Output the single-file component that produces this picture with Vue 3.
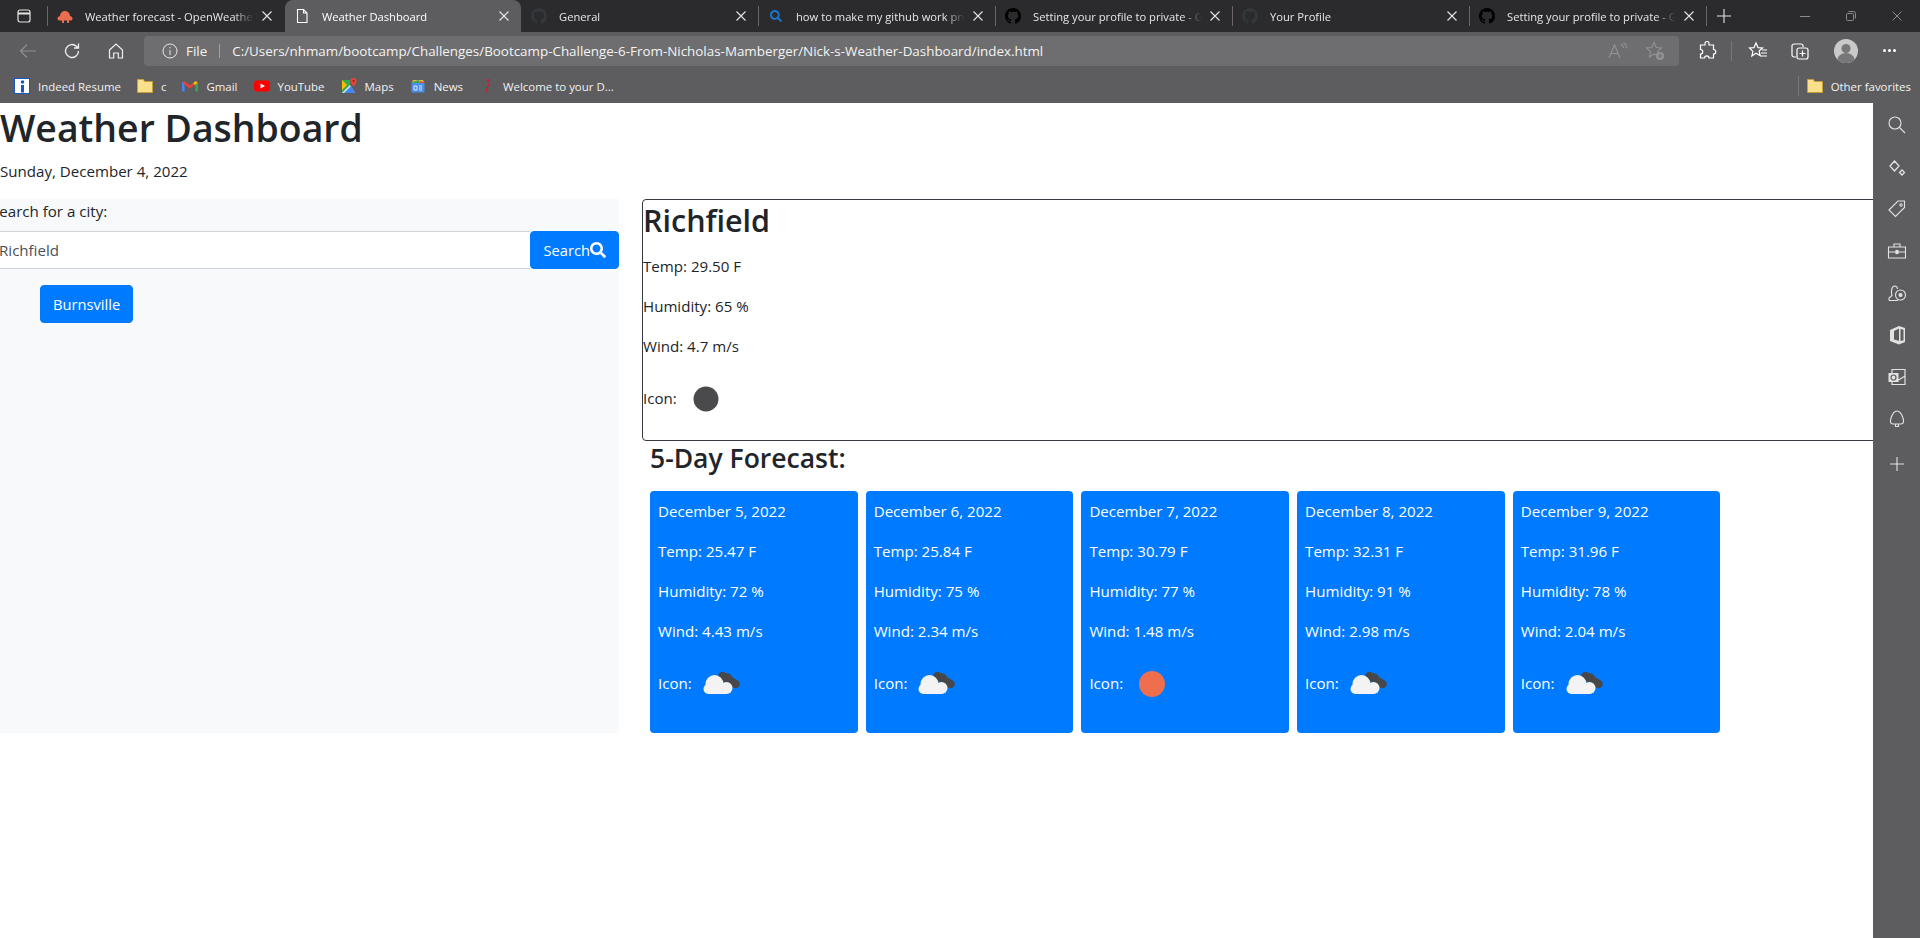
<script setup>
import { ref } from 'vue';

const githubPath = 'M8 0C3.58 0 0 3.58 0 8c0 3.54 2.29 6.53 5.47 7.59.4.07.55-.17.55-.38 0-.19-.01-.82-.01-1.49-2.01.37-2.53-.49-2.69-.94-.09-.23-.48-.94-.82-1.13-.28-.15-.68-.52-.01-.53.63-.01 1.08.58 1.23.82.72 1.21 1.87.87 2.33.66.07-.52.28-.87.51-1.07-1.78-.2-3.64-.89-3.64-3.95 0-.87.31-1.59.82-2.15-.08-.2-.36-1.02.08-2.12 0 0 .67-.21 2.2.82.64-.18 1.32-.27 2-.27.68 0 1.36.09 2 .27 1.53-1.04 2.2-.82 2.2-.82.44 1.1.16 1.92.08 2.12.51.56.82 1.27.82 2.15 0 3.07-1.87 3.75-3.65 3.95.29.25.54.73.54 1.48 0 1.07-.01 1.93-.01 2.2 0 .21.15.46.55.38A8.013 8.013 0 0016 8c0-4.42-3.58-8-8-8z';
const searchPath = 'M505 442.7L405.3 343c-4.5-4.5-10.6-7-17-7H372c27.6-35.3 44-79.7 44-128C416 93.1 322.9 0 208 0S0 93.1 0 208s93.1 208 208 208c48.3 0 92.7-16.4 128-44v16.3c0 6.4 2.5 12.5 7 17l99.7 99.7c9.4 9.4 24.6 9.4 33.9 0l28.3-28.3c9.4-9.4 9.4-24.6.1-34zM208 336c-70.7 0-128-57.2-128-128 0-70.7 57.2-128 128-128 70.7 0 128 57.2 128 128 0 70.7-57.2 128-128 128z';

const tabs = ref([
  { title: 'Weather forecast - OpenWeatherMap', icon: 'owm', sep: false },
  { title: 'Weather Dashboard', icon: 'page', active: true, sep: false },
  { title: 'General', icon: 'hub-dim', sep: true },
  { title: 'how to make my github work private', icon: 'bing', sep: true },
  { title: 'Setting your profile to private - GitHub', icon: 'hub', sep: true },
  { title: 'Your Profile', icon: 'hub-dim', sep: true },
  { title: 'Setting your profile to private - GitHub', icon: 'hub', sep: true }
]);

const bookmarks = ref([
  { label: 'Indeed Resume', icon: 'indeed' },
  { label: 'c', icon: 'folder' },
  { label: 'Gmail', icon: 'gmail' },
  { label: 'YouTube', icon: 'youtube' },
  { label: 'Maps', icon: 'maps' },
  { label: 'News', icon: 'news' },
  { label: 'Welcome to your D...', icon: 'red-i' }
]);

// Dagens vejr i hovedpanelet
const current = ref({ city: 'Richfield', temp: '29.50', humidity: 65, wind: '4.7' });

const forecast = ref([
  { date: 'December 5, 2022', temp: '25.47', humidity: 72, wind: '4.43', icon: 'cloud' },
  { date: 'December 6, 2022', temp: '25.84', humidity: 75, wind: '2.34', icon: 'cloud' },
  { date: 'December 7, 2022', temp: '30.79', humidity: 77, wind: '1.48', icon: 'sun' },
  { date: 'December 8, 2022', temp: '32.31', humidity: 91, wind: '2.98', icon: 'cloud' },
  { date: 'December 9, 2022', temp: '31.96', humidity: 78, wind: '2.04', icon: 'cloud' }
]);

const city = ref('Richfield');
const history = ref(['Burnsville']);
</script>

<template>
  <div class="shell">
    <!-- Browser tabs -->
    <div class="tabstrip">
      <div class="win-btn">
        <svg width="16" height="16" viewBox="0 0 16 16" fill="none" stroke="#e4e4e4" stroke-width="1.2">
          <rect x="2" y="2" width="12" height="12" rx="2" />
          <path d="M2 5.5h12" stroke-width="2" />
        </svg>
      </div>
      <span class="tab-sep"></span>
      <div v-for="(tab, i) in tabs" :key="i" class="tab-wrap">
        <div class="tab" :class="{ active: tab.active }">
          <span class="favicon">
            <svg v-if="tab.icon === 'owm'" width="16" height="16" viewBox="0 0 16 16" fill="#e96e50">
              <path d="M3 8a5 5 0 0 1 10 0c1 0 2.500 1 2.500 2.500S14.500 12.500 14 12.500h-2V15h-2v-2.500H7V15H5v-2.500H2C.8 12.500.5 11 .5 10.300.5 9 2 8 3 8z" />
            </svg>
            <svg v-else-if="tab.icon === 'page'" width="16" height="16" viewBox="0 0 16 16" fill="none" stroke="#fff" stroke-width="1.1">
              <path d="M3.500 1.500h6l3.500 3.500v9.500h-9.500zM9.500 1.500V5H13" />
            </svg>
            <svg v-else-if="tab.icon === 'bing'" width="16" height="16" viewBox="0 0 512 512" fill="#1b76cf">
              <path :d="searchPath" transform="translate(64 64) scale(.75)" />
            </svg>
            <svg v-else width="16" height="16" viewBox="0 0 16 16" :fill="tab.icon === 'hub' ? '#000' : '#33383d'">
              <path :d="githubPath" />
            </svg>
          </span>
          <span class="tab-title">{{ tab.title }}</span>
          <svg class="tab-close" width="10" height="10" viewBox="0 0 10 10" stroke="#e6e6e6" stroke-width="1.1">
            <path d="M.5.5l9 9M9.500.5l-9 9" />
          </svg>
        </div>
        <span class="tab-sep" :class="{ hidden: !tab.sep }"></span>
      </div>
      <svg class="new-tab" width="16" height="16" viewBox="0 0 16 16" stroke="#e6e6e6" stroke-width="1.1">
        <path d="M8 1v14M1 8h14" />
      </svg>
      <div class="win-controls">
        <svg width="10" height="10" viewBox="0 0 10 10" stroke="#8c8c8c"><path d="M0 5.500h10" /></svg>
        <svg width="10" height="10" viewBox="0 0 10 10" stroke="#8c8c8c" fill="none"><rect x=".5" y="2.500" width="7" height="7" rx="1" /><path d="M2.500 .5h5a2 2 0 0 1 2 2v5" /></svg>
        <svg width="10" height="10" viewBox="0 0 10 10" stroke="#8c8c8c"><path d="M.5.5l9 9M9.500.5l-9 9" /></svg>
      </div>
    </div>

    <!-- Toolbar -->
    <div class="toolbar">
      <div class="tool">
        <svg width="18" height="18" viewBox="0 0 18 18" fill="none" stroke="#8f8f91" stroke-width="1.2"><path d="M17 9H1.500M8 2.500L1.500 9 8 15.500" /></svg>
      </div>
      <div class="tool">
        <svg width="18" height="18" viewBox="0 0 18 18" fill="none" stroke="#f0f0f0" stroke-width="1.3"><path d="M15.500 9a6.500 6.500 0 1 1-2-4.700L15.500 6M15.500 1.500V6H11" /></svg>
      </div>
      <div class="tool">
        <svg width="18" height="18" viewBox="0 0 18 18" fill="none" stroke="#f0f0f0" stroke-width="1.2"><path d="M2.500 8L9 2l6.500 6v8h-4.200v-5H6.700v5H2.500z" /></svg>
      </div>
      <div class="address">
        <svg width="16" height="16" viewBox="0 0 16 16" fill="none" stroke="#e8e8e8" stroke-width="1"><circle cx="8" cy="8" r="7" /><path d="M8 7v5M8 4v1.400" /></svg>
        <span class="addr-file">File</span>
        <span class="addr-sep"></span>
        <span class="addr-url">C:/Users/nhmam/bootcamp/Challenges/Bootcamp-Challenge-6-From-Nicholas-Mamberger/Nick-s-Weather-Dashboard/index.html</span>
        <svg class="addr-read" width="20" height="18" viewBox="0 0 20 18" fill="none" stroke="#939395" stroke-width="1.1"><path d="M1 16L6.500 3 12 16M3 11.500h7M13 2a5 5 0 0 1 2.500 4M15.500 .5a7 7 0 0 1 3 6" /></svg>
        <svg class="addr-star" width="20" height="20" viewBox="0 0 20 20" fill="none" stroke="#939395" stroke-width="1.1"><path d="M9 1.500l2.200 5 5.300.5-4 3.600 1 4.400L9 13l-4.500 2.900 1.200-5L1.500 7l5.300-.5z" /><circle cx="15" cy="15" r="4" fill="#939395" stroke="none" /><path d="M15 12.800v4.400M12.800 15h4.400" stroke="#6f6f71" /></svg>
      </div>
      <div class="tools-right">
        <svg class="t-ext" width="20" height="20" viewBox="0 0 20 20" fill="none" stroke="#fff" stroke-width="1.2"><path d="M8 2.500a2 2 0 0 1 4 0V4h4.500v4.500a2.200 2.200 0 0 1 0 4.500v4h-4.500a2.200 2.200 0 0 0-4.400 0H3.500v-4a2.200 2.200 0 0 0 0-4.500V4H8z" /></svg>
        <span class="t-sep"></span>
        <svg class="t-fav" width="20" height="20" viewBox="0 0 20 20" fill="none" stroke="#fff" stroke-width="1.2"><path d="M8 2l2 4.600 4.500.4-3.400 3 1 4.600L8 12.200 3.900 15l1-4.600L1.500 7 6 6.600zM14 9h5M13 12h6M12 15h7" /></svg>
        <svg class="t-col" width="20" height="20" viewBox="0 0 20 20" fill="none" stroke="#fff" stroke-width="1.2"><path d="M6 16H4a2 2 0 0 1-2-2V5a2 2 0 0 1 2-2h7a2 2 0 0 1 2 2v1" /><rect x="7" y="7" width="11" height="11" rx="2" /><path d="M12.500 9.500v6M9.500 12.500h6" /></svg>
        <span class="avatar">
          <svg width="24" height="24" viewBox="0 0 24 24"><circle cx="12" cy="12" r="12" fill="#c9c9c9" /><circle cx="12" cy="9.500" r="4.500" fill="#77777a" /><path d="M3.500 20.500a8.500 6.500 0 0 1 17 0A12 12 0 0 1 3.500 20.500z" fill="#77777a" /></svg>
        </span>
        <span class="t-dots"><i></i><i></i><i></i></span>
      </div>
    </div>

    <!-- Favorites bar -->
    <div class="favbar">
      <div v-for="mark in bookmarks" :key="mark.label" class="mark">
        <svg v-if="mark.icon === 'indeed'" width="16" height="16" viewBox="0 0 16 16">
          <rect width="16" height="16" fill="#fff" />
          <rect x=".5" y=".5" width="15" height="15" fill="none" stroke="#1a55c5" />
          <circle cx="8.500" cy="4" r="1.800" fill="#1a55c5" />
          <path d="M7 7h3v7.500H7z" fill="#1a55c5" />
        </svg>
        <svg v-else-if="mark.icon === 'folder'" width="16" height="16" viewBox="0 0 16 16">
          <path d="M.5 1.500h6l1 2h8v11H.5z" fill="#fbe08b" stroke="#c8a038" />
        </svg>
        <svg v-else-if="mark.icon === 'gmail'" width="16" height="16" viewBox="0 0 16 16" fill="none" stroke-width="2.600">
          <path d="M1.300 13.500V4" stroke="#4285f4" />
          <path d="M14.700 13.500V4" stroke="#34a853" />
          <path d="M1.300 4L8 9l6.700-5" stroke="#ea4335" />
          <path d="M14.700 4L12 6" stroke="#fbbc04" />
        </svg>
        <svg v-else-if="mark.icon === 'youtube'" width="16" height="16" viewBox="0 0 16 16">
          <rect y="2.500" width="16" height="11" rx="3" fill="#f00" />
          <path d="M6.500 5.500L11 8l-4.500 2.500z" fill="#fff" />
        </svg>
        <svg v-else-if="mark.icon === 'maps'" width="16" height="16" viewBox="0 0 16 16">
          <path d="M1 2h8v13H1z" fill="#34a853" />
          <path d="M1 15l8-8 5 8z" fill="#e8e8e8" />
          <path d="M3 15l7-7 4 7z" fill="#4285f4" />
          <path d="M1 2l5 5-5 5z" fill="#fbbc04" />
          <path d="M12.500 0a3 3 0 0 1 3 3c0 2-3 5.500-3 5.500S9.500 5 9.500 3a3 3 0 0 1 3-3z" fill="#ea4335" />
          <circle cx="12.500" cy="3" r="1" fill="#8c1d18" />
        </svg>
        <svg v-else-if="mark.icon === 'news'" width="16" height="16" viewBox="0 0 16 16">
          <path d="M3 2h10l1.500 3h-13z" fill="#e9b93e" />
          <path d="M2 4l7-2 1 3H2z" fill="#3aa757" />
          <path d="M10 3l4 1v2h-4z" fill="#d8503f" />
          <rect x="1.500" y="5" width="13" height="9.500" rx="1" fill="#4a8ff0" />
          <path d="M4 8h3v4H4zM9 8h3M9 10h3M9 12h3" stroke="#dbe7fb" fill="none" />
        </svg>
        <svg v-else width="16" height="16" viewBox="0 0 16 16" fill="#d6162a">
          <circle cx="9.500" cy="2.200" r="1.200" />
          <path d="M9.300 5l-3.200 10 .8.400L10.500 5.300z" />
        </svg>
        <span>{{ mark.label }}</span>
      </div>
      <div class="fav-right">
        <span class="fav-sep"></span>
        <svg width="16" height="16" viewBox="0 0 16 16">
          <path d="M.5 1.500h6l1 2h8v11H.5z" fill="#fbe08b" stroke="#c8a038" />
        </svg>
        <span>Other favorites</span>
      </div>
    </div>

    <div class="viewport">
      <!-- The page itself -->
      <div class="page">
        <h1>Weather Dashboard</h1>
        <p class="today">Sunday, December 4, 2022</p>
        <div class="content">
          <aside class="side">
            <form class="search" @submit.prevent>
              <label for="city">Search for a city:</label>
              <div class="input-group">
                <input id="city" v-model="city" type="text" />
                <button class="btn" type="submit">
                  Search<svg width="16" height="16" viewBox="0 0 512 512" fill="#fff"><path :d="searchPath" /></svg>
                </button>
              </div>
            </form>
            <ul class="history">
              <li v-for="name in history" :key="name"><button class="btn">{{ name }}</button></li>
            </ul>
          </aside>
          <main class="main">
            <section class="today-box">
              <h2>{{ current.city }}</h2>
              <p>Temp: {{ current.temp }} F</p>
              <p>Humidity: {{ current.humidity }} %</p>
              <p>Wind: {{ current.wind }} m/s</p>
              <div class="icon-row">
                <span class="icon-label">Icon:</span>
                <svg width="50" height="50" viewBox="0 0 50 50"><circle cx="25" cy="25" r="12.500" fill="#4a4a4c" /></svg>
              </div>
            </section>
            <h3>5-Day Forecast:</h3>
            <div class="cards">
              <div v-for="day in forecast" :key="day.date" class="card">
                <p>{{ day.date }}</p>
                <p>Temp: {{ day.temp }} F</p>
                <p>Humidity: {{ day.humidity }} %</p>
                <p>Wind: {{ day.wind }} m/s</p>
                <div class="icon-row">
                  <span class="icon-label">Icon:</span>
                  <svg v-if="day.icon === 'sun'" width="50" height="50" viewBox="0 0 50 50"><circle cx="25" cy="25" r="13" fill="#ee6e4e" /></svg>
                  <svg v-else width="50" height="50" viewBox="0 0 50 50">
                    <g transform="translate(-2.500 0)">
                      <path d="M29 17l13 8" stroke="#48484a" stroke-width="8.500" stroke-linecap="round" />
                      <circle cx="34" cy="19" r="4.500" fill="#48484a" />
                      <circle cx="21" cy="25" r="9" fill="#f3f3f3" />
                      <circle cx="33" cy="29" r="6" fill="#f3f3f3" />
                      <circle cx="15" cy="30" r="5" fill="#f3f3f3" />
                      <rect x="15" y="28" width="18" height="7" fill="#f3f3f3" />
                    </g>
                  </svg>
                </div>
              </div>
            </div>
          </main>
        </div>
      </div>

      <!-- Edge sidebar -->
      <div class="edge-bar">
        <svg width="20" height="20" viewBox="0 0 20 20" fill="none" stroke="#e2e2e2" stroke-width="1.100"><circle cx="8" cy="8" r="6" /><path d="M12.500 12.500L18 18" /></svg>
        <svg class="edge-spark" width="20" height="20" viewBox="0 0 20 20" fill="none" stroke="#e2e2e2" stroke-width="1.300"><path d="M7.500 2l4.500 5-4.500 5L3 7zM15 11l2.500 2.500L15 16l-2.500-2.500z" /></svg>
        <svg width="20" height="20" viewBox="0 0 20 20" fill="none" stroke="#e2e2e2" stroke-width="1.100"><path d="M2 11l9-9h6.500v6.500l-9 9z" /><circle cx="14" cy="6" r="1.200" /></svg>
        <svg width="20" height="20" viewBox="0 0 20 20" fill="none" stroke="#e2e2e2" stroke-width="1.100"><path d="M1.500 6h17v11h-17zM1.500 11h17M7 6V3h6v3" /><rect x="9" y="9.500" width="2" height="3" fill="#e2e2e2" /></svg>
        <svg width="20" height="20" viewBox="0 0 20 20" fill="none" stroke="#e2e2e2" stroke-width="1.100"><path d="M2 17.500v-2.500l3-2.500c-1-3-1-9 2.500-9.500 2 0 3 1.500 3 3M2 17.500h9" /><circle cx="13.500" cy="12" r="5" /><circle cx="13.500" cy="12" r="1.500" fill="#e2e2e2" /></svg>
        <svg width="20" height="20" viewBox="0 0 20 20" fill="#e2e2e2"><path d="M12 1l6 2v14l-6 2.500L3 16V5zM12 3.500L7 6v8.500l5 1.200zM13.500 4v12l3-.8V4.800z" fill-rule="evenodd" /></svg>
        <svg width="20" height="20" viewBox="0 0 20 20" fill="none" stroke="#e2e2e2" stroke-width="1.200"><path d="M5 2.500h13v15H5zM5 9l6.500 4L18 9" /><rect x="1.500" y="6" width="10" height="9" fill="#e2e2e2" stroke="none" /><circle cx="6.500" cy="10.500" r="2.500" stroke="#5d5d5f" /></svg>
        <svg width="20" height="20" viewBox="0 0 20 20" fill="none" stroke="#e2e2e2" stroke-width="1.100"><path d="M10 2c3 0 5 4 6 7 1 3 1 6-2 6H6c-3 0-3-3-2-6 1-3 3-7 6-7zM8.500 15v2.500h3V15" /></svg>
        <svg class="edge-plus" width="14" height="14" viewBox="0 0 14 14" stroke="#e2e2e2" stroke-width="1.100"><path d="M7 0v14M0 7h14" /></svg>
      </div>
    </div>
  </div>
</template>

<style>
html,
body {
  margin: 0;
  overflow: hidden;
  background: #fff;
}
</style>

<style scoped>
.shell {
  display: flex;
  flex-direction: column;
  height: 938px;
  font-family: "Open Sans", "Noto Sans", sans-serif;
  color: #212529;
}

/* Tabs */
.tabstrip {
  display: flex;
  align-items: stretch;
  height: 32px;
  background: #2b2b2d;
  font-size: 11.2px;
  color: #e6e6e6;
}
.win-btn {
  display: flex;
  align-items: center;
  justify-content: center;
  width: 47px;
}
.tab-wrap {
  display: flex;
  align-items: center;
  flex: none;
}
.tab {
  display: flex;
  align-items: center;
  width: 236px;
  height: 32px;
  box-sizing: border-box;
  padding: 0 12px 0 9px;
}
.tab.active {
  background: #5d5d5f;
  border-radius: 8px 8px 0 0;
  color: #fff;
}
.tab-sep {
  flex: none;
  align-self: center;
  width: 1px;
  height: 20px;
  background: #67676a;
}
.tab-sep.hidden {
  visibility: hidden;
}
.favicon {
  display: flex;
  flex: none;
  margin-right: 12px;
}
.tab-title {
  flex: 1;
  overflow: hidden;
  margin-right: 8px;
  white-space: nowrap;
  -webkit-mask-image: linear-gradient(to right, #000 88%, transparent);
  mask-image: linear-gradient(to right, #000 88%, transparent);
}
.tab-close {
  flex: none;
}
.new-tab {
  align-self: center;
  margin-left: 9px;
}
.win-controls {
  display: flex;
  align-items: center;
  gap: 36px;
  margin-left: auto;
  padding-right: 18px;
}

/* Toolbar */
.toolbar {
  display: flex;
  align-items: center;
  height: 37px;
  padding-left: 6px;
  background: #5d5d5f;
}
.tool {
  display: flex;
  align-items: center;
  justify-content: center;
  width: 44px;
}
.address {
  display: flex;
  align-items: center;
  width: 1535px;
  height: 30px;
  box-sizing: border-box;
  margin-left: 6px;
  padding: 0 14px 0 18px;
  border-radius: 4px;
  background: #6e6e70;
  color: #f4f4f4;
  font-size: 13.4px;
}
.addr-file {
  margin-left: 8px;
}
.addr-sep {
  width: 1px;
  height: 14px;
  margin: 0 12px;
  background: #a0a0a2;
}
.addr-read {
  margin-left: auto;
}
.addr-star {
  margin-left: 17px;
}
.tools-right {
  display: flex;
  align-items: center;
}
.t-ext {
  margin-left: 18px;
}
.t-sep {
  width: 1px;
  height: 20px;
  margin: 0 16px 0 14px;
  background: #77777a;
}
.t-col {
  margin-left: 22px;
}
.avatar {
  display: flex;
  margin-left: 24px;
}
.t-dots {
  display: flex;
  gap: 2px;
  margin-left: 25px;
}
.t-dots i {
  width: 3px;
  height: 3px;
  border-radius: 50%;
  background: #fff;
}

/* Favorites */
.favbar {
  display: flex;
  align-items: center;
  height: 34px;
  padding-left: 6px;
  background: #5d5d5f;
  color: #f2f2f2;
  font-size: 11.45px;
}
.mark {
  display: flex;
  align-items: center;
  gap: 8px;
  padding: 0 8px;
}
.fav-right {
  display: flex;
  align-items: center;
  gap: 8px;
  margin-left: auto;
  padding-right: 9px;
}
.fav-sep {
  width: 1px;
  height: 20px;
  background: #77777a;
}

/* Page area */
.viewport {
  display: flex;
  flex: 1;
  min-height: 0;
}
.page {
  flex: 1;
  min-width: 0;
  overflow: hidden;
  background: #fff;
  font-size: 15.1px;
  line-height: 24px;
}
h1 {
  margin: 0 0 7px;
  padding-top: 1px;
  font-size: 37.4px;
  font-weight: 600;
  line-height: 48px;
}
.today {
  margin: 0 0 16px;
}
.content {
  display: flex;
  align-items: flex-start;
}
.side {
  flex: none;
  width: 619px;
  height: 534px;
  background: #f8f9fa;
}
.search {
  margin-left: -14px;
}
.search label {
  display: block;
  margin-bottom: 8px;
  padding-left: 5px;
}
.input-group {
  display: flex;
}
.input-group input {
  flex: 1;
  min-width: 0;
  height: 38px;
  box-sizing: border-box;
  padding: 6px 12px;
  border: 1px solid #ced4da;
  border-right: 0;
  background: #fff;
  color: #495057;
  font: inherit;
  outline: none;
}
.btn {
  display: inline-flex;
  align-items: center;
  height: 38px;
  box-sizing: border-box;
  padding: 6px 12px;
  border: 1px solid #007bff;
  border-radius: 4px;
  background: #007bff;
  color: #fff;
  font: inherit;
  font-size: 14.7px;
}
.history {
  margin: 16px 0 0;
  padding: 0 0 0 40px;
  list-style: none;
}
.main {
  flex: none;
  width: 1300px;
  margin-left: 23px;
}
.today-box {
  box-sizing: border-box;
  height: 242px;
  border: 1px solid #343a40;
  border-radius: 4px;
}
h2 {
  margin: 0 0 15px;
  padding-top: 1px;
  font-size: 30.5px;
  font-weight: 600;
  line-height: 38.4px;
}
p {
  margin: 0 0 16px;
}
.icon-row {
  display: flex;
  align-items: center;
  gap: 4px;
  height: 50px;
}
.icon-label {
  margin-bottom: 2px;
}
h3 {
  margin: 0 0 15px;
  padding: 1px 0 0 8px;
  font-size: 26.5px;
  font-weight: 600;
  line-height: 33.6px;
}
.cards {
  display: flex;
  gap: 8px;
  padding-left: 8px;
}
.card {
  flex: none;
  width: 207.7px;
  height: 242px;
  box-sizing: border-box;
  padding: 8px;
  border-radius: 4px;
  background: #007bff;
  color: #fff;
}

/* Edge sidebar */
.edge-bar {
  display: flex;
  flex: none;
  flex-direction: column;
  align-items: center;
  gap: 22px;
  width: 47px;
  padding-top: 12px;
  box-sizing: border-box;
  background: #5d5d5f;
}
.edge-bar svg {
  flex: none;
}
.edge-spark {
  transform: translateY(2px);
}
.edge-plus {
  margin-top: 6px;
}
</style>
